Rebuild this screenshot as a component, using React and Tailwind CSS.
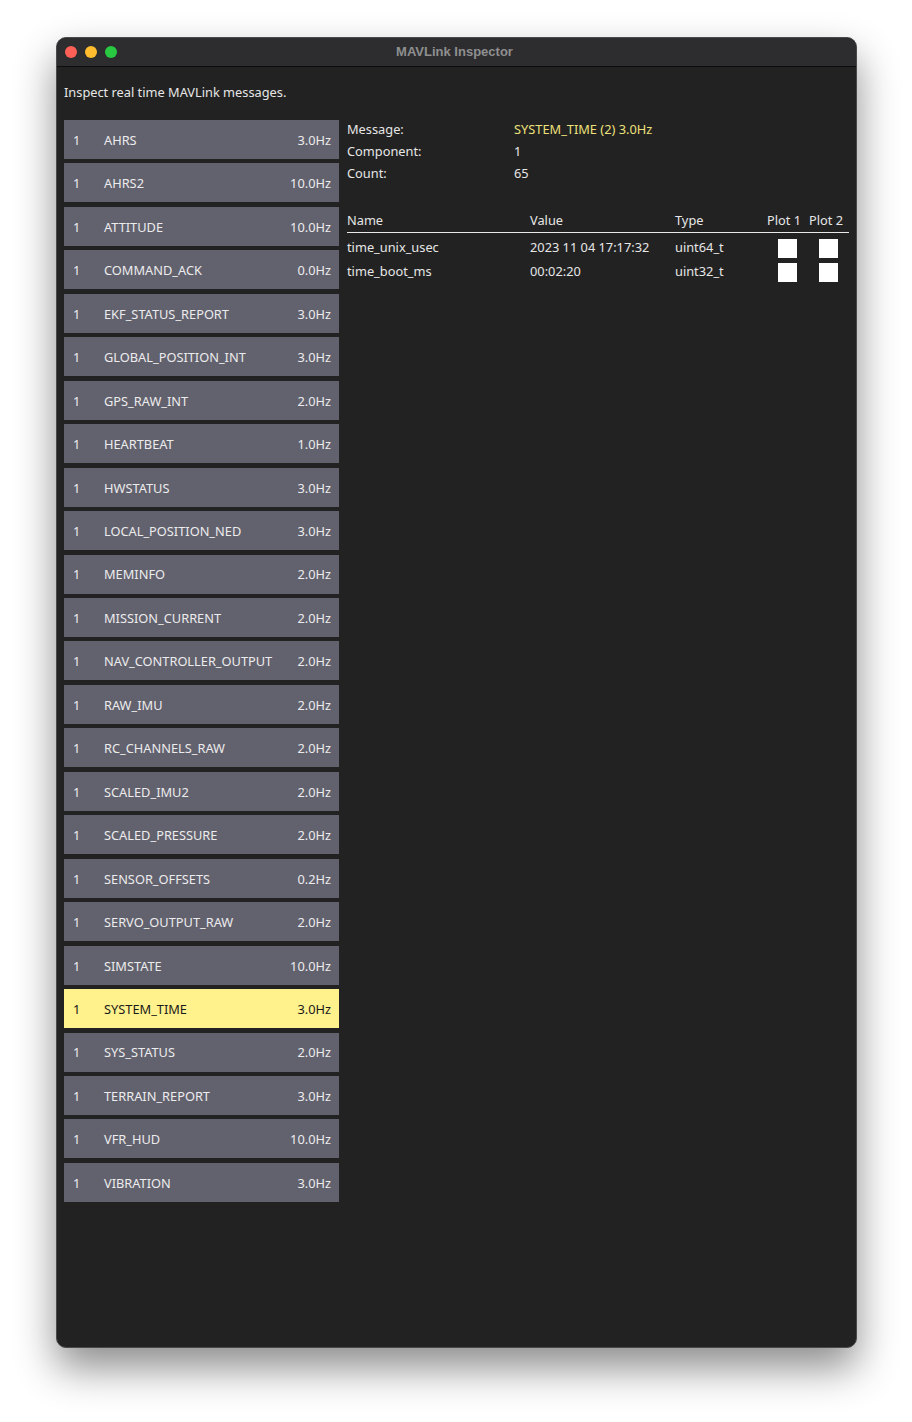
import React from "react";

const rows = [
  ["AHRS", "3.0Hz"],
  ["AHRS2", "10.0Hz"],
  ["ATTITUDE", "10.0Hz"],
  ["COMMAND_ACK", "0.0Hz"],
  ["EKF_STATUS_REPORT", "3.0Hz"],
  ["GLOBAL_POSITION_INT", "3.0Hz"],
  ["GPS_RAW_INT", "2.0Hz"],
  ["HEARTBEAT", "1.0Hz"],
  ["HWSTATUS", "3.0Hz"],
  ["LOCAL_POSITION_NED", "3.0Hz"],
  ["MEMINFO", "2.0Hz"],
  ["MISSION_CURRENT", "2.0Hz"],
  ["NAV_CONTROLLER_OUTPUT", "2.0Hz"],
  ["RAW_IMU", "2.0Hz"],
  ["RC_CHANNELS_RAW", "2.0Hz"],
  ["SCALED_IMU2", "2.0Hz"],
  ["SCALED_PRESSURE", "2.0Hz"],
  ["SENSOR_OFFSETS", "0.2Hz"],
  ["SERVO_OUTPUT_RAW", "2.0Hz"],
  ["SIMSTATE", "10.0Hz"],
  ["SYSTEM_TIME", "3.0Hz"],
  ["SYS_STATUS", "2.0Hz"],
  ["TERRAIN_REPORT", "3.0Hz"],
  ["VFR_HUD", "10.0Hz"],
  ["VIBRATION", "3.0Hz"],
];

const fields = [
  ["time_unix_usec", "2023 11 04 17:17:32", "uint64_t"],
  ["time_boot_ms", "00:02:20", "uint32_t"],
];

export default function App() {
  return (
    <div
      className="w-[912px] h-[1422px] bg-white pt-[37px] pl-[56px]"
      style={{ fontFamily: '"Noto Sans", "Open Sans", sans-serif' }}
    >
      <div className="w-[801px] h-[1311px] rounded-[10px] bg-[#222222] border border-[#4a4a4a] shadow-[0_20px_40px_rgba(0,0,0,0.45)] overflow-hidden flex flex-col">
        <div className="relative h-[29px] bg-[#2d2d2f] border-b border-[#0c0c0c] flex items-center justify-center shrink-0">
          <div className="absolute left-[8px] top-[8px] flex gap-[8px]">
            <div className="w-[12px] h-[12px] rounded-full bg-[#fe5f57]" />
            <div className="w-[12px] h-[12px] rounded-full bg-[#febc2e]" />
            <div className="w-[12px] h-[12px] rounded-full bg-[#28c840]" />
          </div>
          <span
            className="text-[13px] font-bold text-[#8f8f8f] pr-[4px]"
            style={{ fontFamily: '"Liberation Sans", Arial, sans-serif' }}
          >
            MAVLink Inspector
          </span>
        </div>
        <div className="px-[7px] pt-[16px] text-[12.8px] text-[#e6e6e6]">
          <div className="h-[18px] leading-[18px]">Inspect real time MAVLink messages.</div>
          <div className="flex mt-[19px] gap-[8px]">
            <div className="w-[275px] flex flex-col gap-[4.46px] shrink-0">
              {rows.map(([name, hz]) => {
                const sel = name === "SYSTEM_TIME";
                return (
                  <div
                    key={name}
                    className={
                      "h-[39px] flex items-center pl-[9px] pr-[8px] pt-[2px] " +
                      (sel ? "bg-[#fff18c] text-[#1a1a1a]" : "bg-[#62616e] text-[#ececec]")
                    }
                  >
                    <span className="w-[31px]">1</span>
                    <span className="flex-1">{name}</span>
                    <span>{hz}</span>
                  </div>
                );
              })}
            </div>
            <div className="flex-1">
              <div className="grid grid-cols-[167px_1fr] leading-[22px] -mt-[2px]">
                <span>Message:</span>
                <span className="text-[#eee07a]">SYSTEM_TIME (2) 3.0Hz</span>
                <span>Component:</span>
                <span>1</span>
                <span>Count:</span>
                <span>65</span>
              </div>
              <div className="mt-[25px]">
                <div className="flex h-[24px] items-center border-b border-[#e8e8e8] whitespace-nowrap">
                  <span className="w-[183px]">Name</span>
                  <span className="w-[145px]">Value</span>
                  <span className="w-[92px]">Type</span>
                  <span className="w-[42px]">Plot 1</span>
                  <span>Plot 2</span>
                </div>
                <div className="flex flex-col gap-[4px] pt-[5px]">
                  {fields.map(([n, v, t]) => (
                    <div key={n} className="flex h-[20px] items-center whitespace-nowrap">
                      <span className="w-[183px]">{n}</span>
                      <span className="w-[145px]">{v}</span>
                      <span className="w-[103px]">{t}</span>
                      <span className="w-[19px] h-[19px] bg-white" />
                      <span className="w-[22px]" />
                      <span className="w-[19px] h-[19px] bg-white" />
                    </div>
                  ))}
                </div>
              </div>
            </div>
          </div>
        </div>
      </div>
    </div>
  );
}
